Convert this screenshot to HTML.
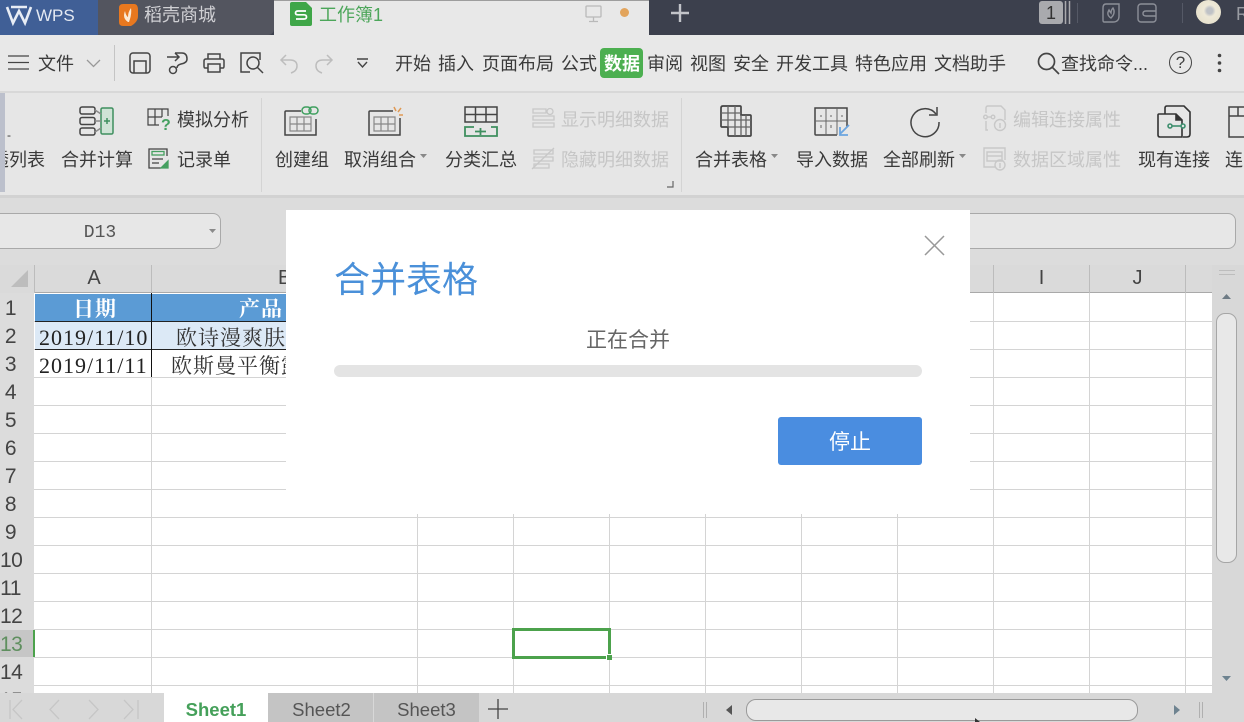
<!DOCTYPE html>
<html lang="zh"><head><meta charset="utf-8"><title>合并表格</title>
<style>
html,body{margin:0;padding:0;width:1244px;height:722px;overflow:hidden;background:#e6e6e6}
body{position:relative;font-family:"Liberation Sans","Noto Sans CJK SC",sans-serif;color:#333}
.a{position:absolute}
.t{position:absolute;white-space:nowrap;font-size:18px;line-height:24px;color:#3a3a3a;letter-spacing:0;margin-top:1px}
.d{color:#c6c6c6}
svg{position:absolute;overflow:visible}
.h{position:absolute;left:34px;width:1178px;height:1px;background:#d4d4d4}
.v{position:absolute;top:293px;height:400px;width:1px;background:#d4d4d4}
.r{position:absolute;left:0;width:21px;text-align:center;font-size:21px;line-height:28px;color:#444;letter-spacing:-.5px}
.c{position:absolute;top:265px;height:28px;font-size:20px;line-height:26px;color:#444;text-align:center}
.s{font-family:"Liberation Serif","Noto Serif CJK SC",serif;font-size:20px;line-height:28px;white-space:nowrap;position:absolute}
</style></head><body>

<!-- title bar -->
<div class="a" style="left:0;top:0;width:1244px;height:35px;background:#3c404d"></div>
<div class="a" style="left:0;top:0;width:98px;height:35px;background:#405f96"></div>
<div class="a" style="left:98px;top:0;width:176px;height:35px;background:#53555f;border-radius:0 0 6px 0"></div>
<div class="a" style="left:274px;top:1px;width:375px;height:34px;background:#e8e8e8"></div>
<div class="a" style="left:274px;top:0;width:375px;height:1px;background:#9d9d9d"></div>
<div class="a" style="left:649px;top:0;width:12px;height:35px;background:#3c404d;border-radius:0 0 0 6px"></div>
<svg style="left:6px;top:5px" width="26" height="20" viewBox="0 0 26 20"><path d="M1 2L7 18L13 6L19 18L25 2M5 2H21" fill="none" stroke="#e8edf5" stroke-width="2.6"/></svg>
<div class="t" style="left:36px;top:3px;color:#e4e9f2;font-size:17px">WPS</div>
<svg style="left:119px;top:4px" width="19" height="22" viewBox="0 0 19 22"><path d="M4 0H15Q19 0 19 6V12Q19 18 12 22H4Q0 22 0 18V4Q0 0 4 0Z" fill="#e8781f"/><path d="M9 18Q3 14 6 7Q7 12 9 13Q9 8 12 4Q13 10 10 18Z" fill="#fbe9d4"/></svg>
<div class="t" style="left:144px;top:2px;color:#d0d0d4">稻壳商城</div>
<svg style="left:290px;top:2px" width="22" height="24" viewBox="0 0 22 24"><path d="M2 0H16L22 6V22Q22 24 20 24H2Q0 24 0 22V2Q0 0 2 0Z" fill="#3fa648"/><path d="M16 9H8Q5.500 9 5.500 11Q5.500 12.800 8 12.800H14Q16.500 12.800 16.500 15Q16.500 17 14 17H6" fill="none" stroke="#fff" stroke-width="1.7"/></svg>
<div class="t" style="left:319px;top:2px;color:#4ca65a">工作簿1</div>
<svg style="left:585px;top:5px" width="18" height="18" viewBox="0 0 18 18" fill="none" stroke="#b9b9b9" stroke-width="1.300"><rect x="1" y="1" width="15" height="11" rx="1"/><path d="M8.500 12V16M4 16.500H13"/></svg>
<div class="a" style="left:620px;top:8px;width:9px;height:9px;border-radius:50%;background:#e2a45c"></div>
<svg style="left:671px;top:4px" width="18" height="18" viewBox="0 0 18 18"><path d="M9 0V18M0 9H18" stroke="#c2c4c9" stroke-width="2.400"/></svg>
<div class="a" style="left:1039px;top:1px;width:24px;height:23px;background:#a9aaae;border-radius:3px;color:#333;font-size:18px;line-height:24px;text-align:center">1</div>
<svg style="left:1064px;top:1px" width="8" height="23"><path d="M1.500 0V23M5.500 0V23" stroke="#a9aaae" stroke-width="1.500"/></svg>
<div class="a" style="left:1077px;top:3px;width:1px;height:20px;background:#555966"></div>
<svg style="left:1102px;top:3px" width="18" height="20" viewBox="0 0 18 20" fill="none" stroke="#8c8f98" stroke-width="1.400"><path d="M4 1H17V13Q17 19 11 19H2Q1 19 1 17V5Q1 1 4 1Z"/><path d="M9 15Q4 12 7 7Q8 9 9 10Q9 7 11 5Q14 10 9 15Z"/></svg>
<svg style="left:1137px;top:3px" width="20" height="20" viewBox="0 0 20 20" fill="none" stroke="#8c8f98" stroke-width="1.400"><rect x="1" y="1" width="18" height="18" rx="3"/><path d="M19 8H9Q6 8 6 10.500Q6 13 9 13H19"/></svg>
<div class="a" style="left:1182px;top:3px;width:1px;height:20px;background:#555966"></div>
<div class="a" style="left:1196px;top:0;width:25px;height:24px;border-radius:50%;background:radial-gradient(circle at 55% 45%,#bfc2c6 0 3px,#eee9d8 6px,#e2dcc6)"></div>
<div class="t" style="left:1236px;top:1px;color:#9a9ca3">R</div>

<!-- menu row -->
<div class="a" style="left:0;top:35px;width:1244px;height:57px;background:#e8e8e8"></div>
<div class="a" style="left:0;top:91px;width:1244px;height:2px;background:#d8d8d8"></div>
<svg style="left:8px;top:55px" width="21" height="15"><path d="M0 1H21M0 7.500H21M0 14H21" stroke="#444" stroke-width="1.300"/></svg>
<div class="t" style="left:38px;top:51px">文件</div>
<svg style="left:86px;top:59px" width="15" height="9" fill="none"><path d="M1 1L7.500 7.500L14 1" stroke="#999" stroke-width="1.300"/></svg>
<div class="a" style="left:114px;top:45px;width:1px;height:36px;background:#c4c4c4"></div>
<svg style="left:129px;top:52px" width="22" height="22" fill="none" stroke="#444" stroke-width="1.500"><rect x="1" y="1" width="20" height="20" rx="3"/><path d="M5 21V9H17V21"/></svg>
<svg style="left:167px;top:52px" width="22" height="22" fill="none" stroke="#444" stroke-width="1.500"><path d="M0 5H11M8 1L12 5L8 9"/><path d="M8 1H15Q20 1 20 7Q20 11 14 12Q10 13 10 16"/><circle cx="6" cy="18" r="3.500"/></svg>
<svg style="left:203px;top:53px" width="22" height="20" fill="none" stroke="#444" stroke-width="1.500"><path d="M5 6V1H17V6M5 15H2Q1 15 1 13V8Q1 6 3 6H19Q21 6 21 8V13Q21 15 20 15H17"/><rect x="5" y="11" width="12" height="8"/></svg>
<svg style="left:240px;top:52px" width="24" height="22" fill="none" stroke="#444" stroke-width="1.500"><path d="M20 8V1H1V20H10"/><circle cx="13" cy="11" r="6"/><path d="M17 15L23 21"/></svg>
<svg style="left:280px;top:54px" width="18" height="20" fill="none" stroke="#bdbdbd" stroke-width="1.500"><path d="M6 1L1 6L6 11M1 6H10Q17 6 17 12Q17 17 11 19"/></svg>
<svg style="left:315px;top:54px" width="18" height="20" fill="none" stroke="#bdbdbd" stroke-width="1.500"><path d="M12 1L17 6L12 11M17 6H8Q1 6 1 12Q1 17 7 19"/></svg>
<svg style="left:357px;top:58px" width="12" height="11" fill="none" stroke="#444" stroke-width="1.400"><path d="M0 1H11M1 4L5.500 9L10 4"/></svg>
<div class="t" style="left:395px;top:51px">开始</div>
<div class="t" style="left:438px;top:51px">插入</div>
<div class="t" style="left:482px;top:51px">页面布局</div>
<div class="t" style="left:561px;top:51px">公式</div>
<div class="a" style="left:600px;top:48px;width:43px;height:30px;background:#4caf50;border-radius:4px"></div>
<div class="t" style="left:604px;top:51px;color:#fff;font-weight:700">数据</div>
<div class="t" style="left:647px;top:51px">审阅</div>
<div class="t" style="left:690px;top:51px">视图</div>
<div class="t" style="left:733px;top:51px">安全</div>
<div class="t" style="left:776px;top:51px">开发工具</div>
<div class="t" style="left:855px;top:51px">特色应用</div>
<div class="t" style="left:934px;top:51px">文档助手</div>
<svg style="left:1037px;top:52px" width="23" height="23" fill="none" stroke="#444" stroke-width="1.700"><circle cx="9.500" cy="9.500" r="8"/><path d="M15 15L22 22"/></svg>
<div class="t" style="left:1061px;top:51px">查找命令...</div>
<div class="a" style="left:1169px;top:51px;width:21px;height:21px;border:1.500px solid #444;border-radius:50%;font-size:17px;line-height:21px;text-align:center;color:#444">?</div>
<svg style="left:1217px;top:53px" width="5" height="20"><circle cx="2.500" cy="2.500" r="1.800" fill="#444"/><circle cx="2.500" cy="10" r="1.800" fill="#444"/><circle cx="2.500" cy="17.500" r="1.800" fill="#444"/></svg>

<!-- ribbon -->
<div class="a" style="left:0;top:93px;width:1244px;height:102px;background:#e6e6e6"></div>
<div class="a" style="left:0;top:195px;width:1244px;height:3px;background:#d2d2d2"></div>
<div class="a" style="left:261px;top:98px;width:1px;height:94px;background:#d4d4d4"></div>
<div class="a" style="left:681px;top:98px;width:1px;height:94px;background:#d4d4d4"></div>
<div class="t" style="left:7px;top:122px;font-size:12px">-</div>
<div class="t" style="left:-9px;top:147px">透列表</div>
<div class="a" style="left:0;top:93px;width:5px;height:99px;background:#bcc0cc"></div>
<svg style="left:79px;top:106px" width="35" height="30" fill="none" stroke="#444" stroke-width="1.500"><rect x="1" y="1" width="15" height="7" rx="2"/><rect x="1" y="11.500" width="15" height="7" rx="2"/><rect x="1" y="22" width="15" height="7" rx="2"/><rect x="22" y="2" width="12" height="26" rx="1.500" fill="#cfe3d6" stroke="#3f8f5f"/><path d="M25 15H31M28 12V18" stroke="#3f8f5f"/><path d="M16 4L22 8M16 15H22M16 26L22 22" stroke="#8a8a8a"/></svg>
<div class="t" style="left:61px;top:147px">合并计算</div>
<svg style="left:147px;top:108px" width="24" height="23" fill="none" stroke="#444" stroke-width="1.200"><path d="M21 8V1H1V17H12M1 9H15M8 1V17M15 1V9"/><text x="14" y="22" font-size="16" font-weight="700" fill="#45a060" stroke="none" font-family="Liberation Sans">?</text></svg>
<div class="t" style="left:177px;top:107px">模拟分析</div>
<svg style="left:148px;top:148px" width="23" height="21" fill="none" stroke="#444" stroke-width="1.300"><path d="M13 20H1V1H19V8"/><rect x="4" y="3.500" width="12" height="3.500" stroke="#45a060"/><path d="M4 11H15M4 15H11"/><path d="M13 20L20 13V20Z" fill="#45a060" stroke="#45a060"/></svg>
<div class="t" style="left:177px;top:147px">记录单</div>

<svg style="left:284px;top:106px" width="36" height="31" fill="none" stroke="#444" stroke-width="1.500"><path d="M17 5H2Q1 5 1 6V29H32V13"/><path d="M6 11H27V25H6ZM6 18H27M13 11V25M20 11V25" stroke="#888" stroke-width="1.200"/><rect x="18" y="1" width="9" height="7" rx="3.500" stroke="#3f9f5f"/><rect x="25" y="1" width="9" height="7" rx="3.500" stroke="#3f9f5f"/></svg>
<div class="t" style="left:275px;top:147px">创建组</div>
<svg style="left:368px;top:106px" width="36" height="31" fill="none" stroke="#444" stroke-width="1.500"><path d="M25 5H2Q1 5 1 6V29H32V12"/><path d="M6 11H27V25H6ZM6 18H27M13 11V25M20 11V25" stroke="#888" stroke-width="1.200"/><path d="M26 1L28 5M33 2L30 6M35 9H31" stroke="#e09a55"/></svg>
<div class="t" style="left:344px;top:147px">取消组合</div>
<svg style="left:420px;top:154px" width="7" height="4"><path d="M0 0H7L3.500 4Z" fill="#888"/></svg>
<svg style="left:464px;top:106px" width="34" height="31" fill="none" stroke="#444" stroke-width="1.500"><path d="M1 1H33V16H1ZM1 8.500H33M11.500 1V16M22 1V16"/><path d="M10 21H1V30H33V21H27M11 25.500H22M16.500 22V29" stroke="#3f8f5f" stroke-width="1.800"/></svg>
<div class="t" style="left:445px;top:147px">分类汇总</div>
<svg style="left:532px;top:108px" width="23" height="20" fill="none" stroke="#c8c8c8" stroke-width="1.300"><path d="M1 1H14V5H1ZM1 8H22V12H1ZM1 15H22V19H1Z"/><circle cx="18" cy="3.500" r="3"/></svg>
<div class="t d" style="left:561px;top:107px">显示明细数据</div>
<svg style="left:531px;top:147px" width="24" height="23" fill="none" stroke="#c8c8c8" stroke-width="1.300"><path d="M3 3H22V7H3ZM3 10H22V14H3ZM3 17H18V21H3Z"/><path d="M1 22L23 1"/></svg>
<div class="t d" style="left:561px;top:147px">隐藏明细数据</div>
<svg style="left:667px;top:181px" width="7" height="7" fill="none"><path d="M6 0V6H0" stroke="#666" stroke-width="1.200"/></svg>

<svg style="left:720px;top:105px" width="32" height="32" fill="none" stroke="#444" stroke-width="1.300"><path d="M3 1H20Q21 1 21 2V10H30Q31 10 31 11V30Q31 31 30 31H9Q8 31 8 30V22H2Q1 22 1 21V3Q1 1 3 1Z" stroke-width="1.700"/><path d="M1 8H21M1 15H31M8 1V22M15 1V31M21 10V31M8 22H31M26 10V31" stroke="#666"/></svg>
<div class="t" style="left:695px;top:147px">合并表格</div>
<svg style="left:771px;top:154px" width="7" height="4"><path d="M0 0H7L3.500 4Z" fill="#888"/></svg>
<svg style="left:814px;top:107px" width="38" height="32" fill="none" stroke="#444" stroke-width="1.500"><path d="M23 28H2Q1 28 1 27V1H33V20"/><path d="M1 14H33M12 1V28M23 1V28M7 8V10M17 8V10M28 8V10M7 18V21M17 18V21" stroke="#666" stroke-width="1"/><path d="M35 18L26 27M26 20V28H34" stroke="#6ba5e0" stroke-width="1.800"/></svg>
<div class="t" style="left:796px;top:147px">导入数据</div>
<svg style="left:909px;top:106px" width="32" height="32" fill="none" stroke="#444" stroke-width="1.500"><path d="M27 8A14 14 0 1 0 30 16"/><path d="M28 1V9H20"/></svg>
<div class="t" style="left:883px;top:147px">全部刷新</div>
<svg style="left:959px;top:154px" width="7" height="4"><path d="M0 0H7L3.500 4Z" fill="#888"/></svg>
<svg style="left:983px;top:105px" width="24" height="26" fill="none" stroke="#c8c8c8" stroke-width="1.400"><path d="M3 8V3Q3 1 5 1H18L22 5V15M5 25H3V16"/><circle cx="2.500" cy="12" r="1.800"/><circle cx="10" cy="12" r="1.800"/><path d="M4 12H8"/><circle cx="17" cy="20" r="5.500"/><path d="M17 18V23"/></svg>
<div class="t d" style="left:1013px;top:107px">编辑连接属性</div>
<svg style="left:983px;top:147px" width="24" height="24" fill="none" stroke="#c8c8c8" stroke-width="1.400"><path d="M12 20H1V1H22V13"/><path d="M4 5H19V14H4ZM4 9H19"/><circle cx="17" cy="18" r="5"/><path d="M17 16V21"/></svg>
<div class="t d" style="left:1013px;top:147px">数据区域属性</div>
<svg style="left:1157px;top:105px" width="34" height="34" fill="none" stroke="#333" stroke-width="1.600"><path d="M8 9V3Q8 1 10 1H27L33 7V29Q33 32 30 32H26"/><path d="M2 9H19L25 15V32H3Q1 32 1 30V10Q1 9 2 9Z"/><path d="M19 9V15H25" fill="#333"/><path d="M13 21H26" stroke="#3f8f6f"/><circle cx="13" cy="21" r="2" stroke="#3f8f6f" fill="#e6e6e6"/><circle cx="26" cy="21" r="2" stroke="#3f8f6f" fill="#e6e6e6"/></svg>
<div class="t" style="left:1138px;top:147px">现有连接</div>
<svg style="left:1228px;top:106px" width="16" height="32" fill="none" stroke="#444" stroke-width="1.500"><path d="M16 1H1V31H16M1 10H16M10 1V10"/></svg>
<div class="t" style="left:1225px;top:147px">连</div>

<!-- formula bar -->
<div class="a" style="left:0;top:198px;width:1244px;height:67px;background:#dcdcdc"></div>
<div class="a" style="left:-8px;top:213px;width:227px;height:34px;background:#e7e7e7;border:1px solid #a9a9a9;border-radius:8px"></div>
<div class="a" style="left:0;top:219px;width:200px;text-align:center;font-family:'Liberation Mono',monospace;font-size:18px;line-height:24px;color:#555;margin-top:2px">D13</div>
<svg style="left:209px;top:229px" width="7" height="4"><path d="M0 0H7L3.500 4Z" fill="#8a8a8a"/></svg>
<div class="a" style="left:900px;top:213px;width:334px;height:34px;background:#e7e7e7;border:1px solid #a9a9a9;border-radius:8px"></div>

<!-- grid -->
<div class="a" style="left:0;top:265px;width:1244px;height:28px;background:#dadada"></div>
<div class="a" style="left:0;top:293px;width:34px;height:400px;background:#dcdcdc"></div>
<div class="a" style="left:34px;top:293px;width:1178px;height:400px;background:#fff"></div>
<div class="a" style="left:1212px;top:265px;width:32px;height:428px;background:#d8d8d8"></div>
<div class="a" style="left:34px;top:292px;width:1178px;height:1px;background:#a9a9a9"></div>
<svg style="left:11px;top:270px" width="17" height="17"><path d="M17 0V17H0Z" fill="#bdbdbd"/></svg>
<div class="h" style="top:321px"></div><div class="h" style="top:349px"></div><div class="h" style="top:377px"></div><div class="h" style="top:405px"></div><div class="h" style="top:433px"></div><div class="h" style="top:461px"></div><div class="h" style="top:489px"></div><div class="h" style="top:517px"></div><div class="h" style="top:545px"></div><div class="h" style="top:573px"></div><div class="h" style="top:601px"></div><div class="h" style="top:629px"></div><div class="h" style="top:657px"></div><div class="h" style="top:685px"></div>
<div class="v" style="left:151px"></div><div class="v" style="left:417px"></div><div class="v" style="left:513px"></div><div class="v" style="left:609px"></div><div class="v" style="left:705px"></div><div class="v" style="left:801px"></div><div class="v" style="left:897px"></div><div class="v" style="left:993px"></div><div class="v" style="left:1089px"></div><div class="v" style="left:1185px"></div>
<div class="a" style="left:34px;top:265px;width:1px;height:28px;background:#bcbcbc"></div>
<div class="a" style="left:151px;top:265px;width:1px;height:28px;background:#bcbcbc"></div>
<div class="a" style="left:993px;top:265px;width:1px;height:28px;background:#bcbcbc"></div>
<div class="a" style="left:1089px;top:265px;width:1px;height:28px;background:#bcbcbc"></div>
<div class="a" style="left:1185px;top:265px;width:1px;height:28px;background:#bcbcbc"></div>
<div class="c" style="left:36px;width:116px">A</div>
<div class="c" style="left:278px;width:12px">B</div>
<div class="c" style="left:994px;width:95px">I</div>
<div class="c" style="left:1090px;width:95px">J</div>

<div class="r" style="top:295px">1</div><div class="r" style="top:323px">2</div><div class="r" style="top:351px">3</div><div class="r" style="top:379px">4</div><div class="r" style="top:407px">5</div><div class="r" style="top:435px">6</div><div class="r" style="top:463px">7</div><div class="r" style="top:491px">8</div><div class="r" style="top:519px">9</div><div class="r" style="top:547px">10</div><div class="r" style="top:575px">11</div><div class="r" style="top:603px">12</div>
<div class="a" style="left:0;top:630px;width:34px;height:27px;background:#c6c6c6"></div>
<div class="a" style="left:33px;top:630px;width:2px;height:27px;background:#4ca24c"></div>
<div class="r" style="top:631px;color:#5f8f5f">13</div><div class="r" style="top:659px">14</div><div class="r" style="top:687px;height:6px;overflow:hidden">15</div>

<!-- table -->
<div class="a" style="left:35px;top:294px;width:251px;height:27px;background:#5b9bd5"></div>
<div class="a" style="left:35px;top:322px;width:251px;height:27px;background:#dce9f6"></div>
<div class="a" style="left:35px;top:321px;width:251px;height:1px;background:#222"></div>
<div class="a" style="left:35px;top:349px;width:251px;height:1px;background:#222"></div>
<div class="a" style="left:151px;top:293px;width:1px;height:84px;background:#111"></div>
<div class="s" style="left:73px;top:295px;color:#fff;letter-spacing:1px;font-size:21px;font-weight:700">日期</div>
<div class="s" style="left:239px;top:295px;color:#fff;letter-spacing:1px;font-size:21px;font-weight:700">产品</div>
<div class="s" style="left:39px;top:324px;color:#222;letter-spacing:1px;font-size:22px">2019/11/10</div>
<div class="s" style="left:39px;top:352px;color:#222;letter-spacing:1px;font-size:22px">2019/11/11</div>
<div class="s" style="left:176px;top:324px;color:#333;letter-spacing:1px;font-size:21px">欧诗漫爽肤</div>
<div class="s" style="left:171px;top:352px;color:#333;letter-spacing:1px;font-size:21px;width:115px;overflow:hidden">欧斯曼平衡露</div>

<!-- selection -->
<div class="a" style="left:512px;top:628px;width:93px;height:25px;border:3px solid #4ca24c"></div>
<div class="a" style="left:606px;top:654px;width:6px;height:6px;background:#4ca24c;border-top:1px solid #fff;border-left:1px solid #fff;box-sizing:border-box"></div>

<!-- scrollbars -->
<svg style="left:1219px;top:270px" width="16" height="6"><path d="M0 .5H16M0 4.500H16" stroke="#bdbdbd"/></svg>
<svg style="left:1222px;top:294px" width="9" height="5"><path d="M4.500 0L9 5H0Z" fill="#6e7b85"/></svg>
<div class="a" style="left:1216px;top:313px;width:19px;height:248px;background:#e8e8e8;border:1px solid #a6a6a6;border-radius:9px"></div>
<svg style="left:1222px;top:676px" width="9" height="5"><path d="M0 0H9L4.500 5Z" fill="#6e8390"/></svg>

<!-- sheet bar -->
<div class="a" style="left:0;top:693px;width:1244px;height:29px;background:#d8d8d8"></div>
<svg style="left:9px;top:700px" width="130" height="19" fill="none" stroke="#c6c6c6" stroke-width="1.300"><path d="M1 0V19M13 0L4 9.500L13 19M50 0L41 9.500L50 19M80 0L89 9.500L80 19M115 0L124 9.500L115 19M129 0V19"/></svg>
<div class="a" style="left:164px;top:693px;width:106px;height:29px;background:#fff;text-align:center;font-size:18.5px;line-height:34px;font-weight:700;color:#45a05a;width:104px">Sheet1</div>
<div class="a" style="left:268px;top:693px;width:105px;height:29px;background:#c4c4c4;text-align:center;font-size:18.5px;line-height:34px;color:#555;text-indent:2px">Sheet2</div>
<div class="a" style="left:374px;top:693px;width:105px;height:29px;background:#c4c4c4;text-align:center;font-size:18.5px;line-height:34px;color:#555">Sheet3</div>
<svg style="left:488px;top:699px" width="20" height="20"><path d="M10 0V20M0 10H20" stroke="#444" stroke-width="1.300"/></svg>
<svg style="left:703px;top:702px" width="5" height="16"><path d="M.5 0V16M3.500 0V16" stroke="#b0b0b0"/></svg>
<svg style="left:726px;top:705px" width="6" height="10"><path d="M6 0V10L0 5Z" fill="#555"/></svg>
<div class="a" style="left:746px;top:699px;width:390px;height:20px;background:#e8e8e8;border:1px solid #9a9a9a;border-radius:10px"></div>
<svg style="left:1174px;top:705px" width="6" height="10"><path d="M0 0V10L6 5Z" fill="#6e8390"/></svg>
<svg style="left:1199px;top:702px" width="5" height="16"><path d="M.5 0V16M3.500 0V16" stroke="#b0b0b0"/></svg>
<svg style="left:975px;top:718px" width="6" height="4"><path d="M0 0L5 4H0Z" fill="#333"/></svg>

<!-- modal -->
<div class="a" style="left:286px;top:210px;width:684px;height:304px;background:#fff"></div>
<div class="t" style="left:334px;top:255px;font-size:36px;line-height:48px;color:#4a90d9">合并表格</div>
<svg style="left:924px;top:235px" width="21" height="21"><path d="M1 1L20 20M20 1L1 20" stroke="#999" stroke-width="1.500"/></svg>
<div class="t" style="left:586px;top:326px;font-size:21px;line-height:28px;color:#666">正在合并</div>
<div class="a" style="left:334px;top:365px;width:588px;height:12px;background:#e4e4e4;border-radius:6px"></div>
<div class="a" style="left:778px;top:417px;width:144px;height:48px;background:#4a8de0;border-radius:3px;color:#fff;font-size:21px;line-height:51px;text-align:center">停止</div>
</body></html>
